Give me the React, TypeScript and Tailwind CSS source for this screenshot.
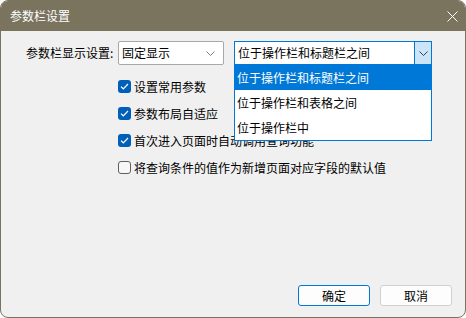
import React from 'react';

const font = { fontFamily: '"Noto Sans CJK SC", "Microsoft YaHei", sans-serif' };

const Chevron: React.FC<{ color?: string }> = ({ color = '#606060' }) => (
  <svg width="9" height="5" viewBox="0 0 9 5" fill="none">
    <polyline points="0.5,0.5 4.5,4.5 8.5,0.5" stroke={color} strokeWidth="1" />
  </svg>
);

const Check: React.FC<{ checked: boolean; label: string }> = ({ checked, label }) => (
  <div className="flex h-[27px] items-center">
    {checked ? (
      <span className="flex h-[13px] w-[13px] items-center justify-center rounded-[3px] bg-[#005fb8]">
        <svg width="9" height="7" viewBox="0 0 9 7" fill="none">
          <polyline points="1,3.6 3.3,5.8 8,1" stroke="#fff" strokeWidth="1.2" />
        </svg>
      </span>
    ) : (
      <span className="h-[13px] w-[13px] rounded-[3px] border border-[#5f5f5f] bg-[#f7f7f7]" />
    )}
    <span className="ml-[3px] text-[12px] leading-none text-black">{label}</span>
  </div>
);

const options = ['位于操作栏和标题栏之间', '位于操作栏和表格之间', '位于操作栏中'];

export default function App() {
  return (
    <div className="h-[318px] w-[466px] bg-white" style={font}>
      <div className="flex h-full w-full flex-col overflow-hidden rounded-t-[8px] rounded-b-[8px] border border-[#7a735e] bg-[#f0f0f0]">
        <div className="flex h-[30px] shrink-0 items-center justify-between bg-[#7a735e] pl-[9px] pr-[7px]">
          <span className="text-[12px] text-white">参数栏设置</span>
          <svg width="11" height="11" viewBox="0 0 11 11" fill="none">
            <line x1="0.5" y1="0.5" x2="10.5" y2="10.5" stroke="#fff" strokeWidth="1" />
            <line x1="10.5" y1="0.5" x2="0.5" y2="10.5" stroke="#fff" strokeWidth="1" />
          </svg>
        </div>

        <div className="flex flex-1 flex-col">
          <div className="mt-[10px] flex items-center pl-[25px]">
            <span className="w-[92px] text-[12px] text-black">参数栏显示设置:</span>
            <div className="flex h-[24px] w-[106px] items-center justify-between rounded-[2px] border border-[#a8a8a8] bg-white pl-[3px] pr-[8px]">
              <span className="text-[12px] text-black">固定显示</span>
              <Chevron color="#808080" />
            </div>
            <div className="relative ml-[10px] h-[24px] w-[198px]">
              <div className="flex h-full w-full items-center justify-between border border-[#0078d7] bg-white pl-[3px]">
                <span className="text-[12px] text-black">{options[0]}</span>
                <div className="flex h-full w-[17px] items-center justify-center border-l border-[#0078d7] bg-[#cce4f7]">
                  <Chevron color="#404040" />
                </div>
              </div>
              <div className="absolute left-0 top-[23px] z-10 w-[198px] border border-[#0078d7] bg-white">
                {options.map((o, i) => (
                  <div
                    key={o}
                    className={`flex h-[25px] items-center pl-[2px] text-[12px] ${i === 0 ? 'bg-[#0078d7] text-white' : 'text-black'}`}
                  >
                    {o}
                  </div>
                ))}
              </div>
            </div>
          </div>

          <div className="mt-[8px] flex flex-col pl-[117px]">
            <Check checked label="设置常用参数" />
            <Check checked label="参数布局自适应" />
            <Check checked label="首次进入页面时自动调用查询功能" />
            <Check checked={false} label="将查询条件的值作为新增页面对应字段的默认值" />
          </div>

          <div className="mt-auto flex justify-end gap-[10px] pb-[11px] pr-[13px]">
            <button className="flex h-[21px] w-[72px] items-center justify-center rounded-[3px] border border-[#0078d7] bg-[#fdfdfd] text-[12px] text-black">
              确定
            </button>
            <button className="flex h-[21px] w-[72px] items-center justify-center rounded-[3px] border border-[#d0d0d0] bg-[#fdfdfd] text-[12px] text-black">
              取消
            </button>
          </div>
        </div>
      </div>
    </div>
  );
}
